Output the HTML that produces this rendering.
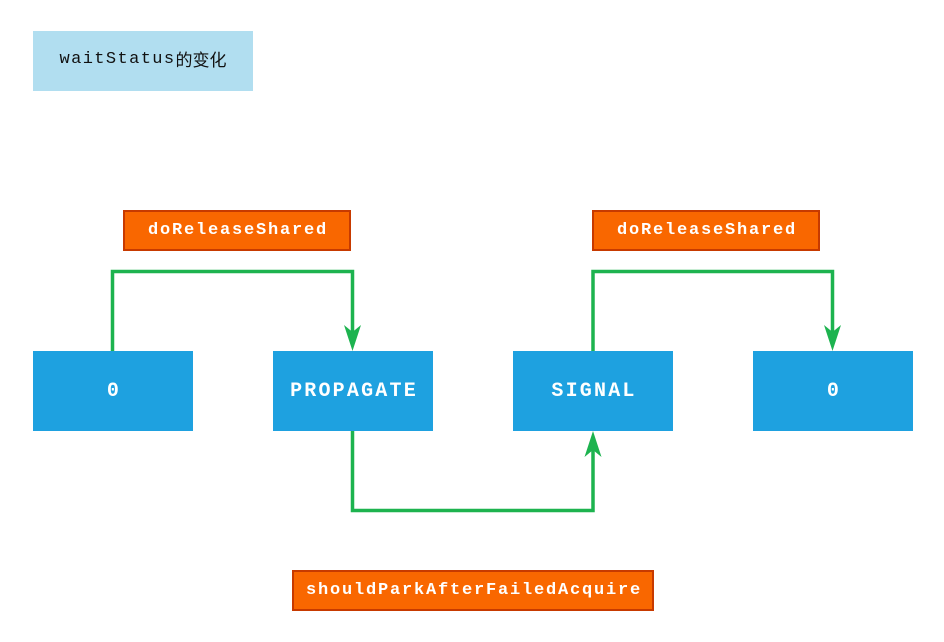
<!DOCTYPE html>
<html><head><meta charset="utf-8"><style>
body{margin:0;width:944px;height:642px;background:#fff;position:relative;overflow:hidden;font-family:"Liberation Mono",monospace}
.b{position:absolute;display:flex;align-items:center;justify-content:center;box-sizing:border-box}
.t{left:33px;top:31px;width:220px;height:60px;background:#b1def0;color:#111;font-size:17px;font-family:"Liberation Mono","Noto Sans CJK SC",monospace;padding-bottom:4px}
.t span{letter-spacing:1.4px}
.o{background:#f96700;border:2px solid #c73a00;color:#fff;font-weight:bold;font-size:17px;letter-spacing:1.8px;height:41px;padding-left:2px}
.n{background:#1ea1e0;color:#fff;font-weight:bold;font-size:20px;letter-spacing:2.2px;width:160px;height:80px;top:351px;padding-left:2px}
svg{position:absolute;left:0;top:0}
</style></head><body>
<div class="b t"><span>waitStatus</span>的变化</div>
<div class="b o" style="left:123px;top:210px;width:228px">doReleaseShared</div>
<div class="b o" style="left:592px;top:210px;width:228px">doReleaseShared</div>
<div class="b o" style="left:292px;top:570px;width:362px">shouldParkAfterFailedAcquire</div>
<div class="b n" style="left:33px">0</div>
<div class="b n" style="left:273px">PROPAGATE</div>
<div class="b n" style="left:513px">SIGNAL</div>
<div class="b n" style="left:753px">0</div>
<svg width="944" height="642">
<g fill="none" stroke="#1db34f" stroke-width="3.5">
<path d="M112.5 351V271.5H352.5V335"/>
<path d="M352.5 431V510.5H593V447"/>
<path d="M593 351V271.5H832.5V335"/>
</g>
<g fill="#1db34f">
<path d="M352.5 351L344 325L352.5 332L361 325Z"/>
<path d="M832.5 351L824 325L832.5 332L841 325Z"/>
<path d="M593 431L584.5 457L593 450L601.5 457Z"/>
</g>
</svg>
</body></html>
